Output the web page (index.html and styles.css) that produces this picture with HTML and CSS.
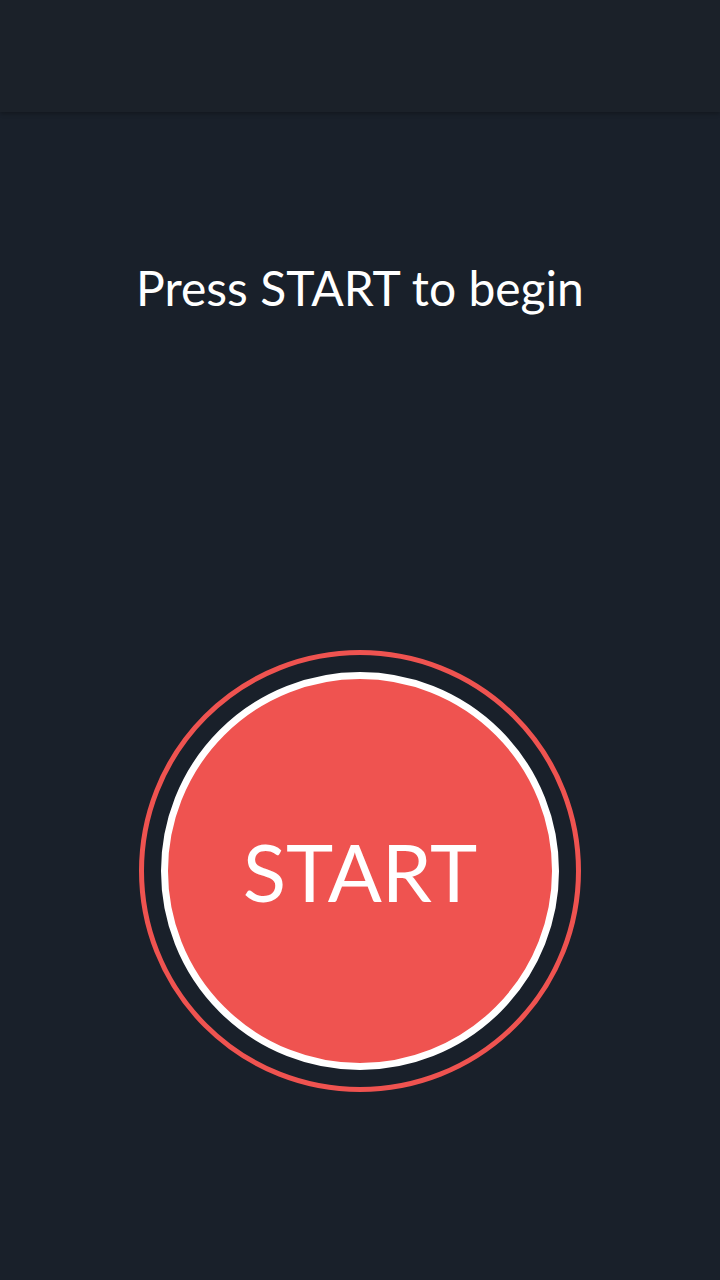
FILE: index.html
```html
<!DOCTYPE html>
<html>
<head>
<meta charset="utf-8">
<link rel="stylesheet" href="styles.css">
</head>
<body>
<div class="app">
  <header class="topbar"></header>
  <main class="main">
    <p class="prompt">Press START to begin</p>
    <div class="ring">
      <button class="start">START</button>
    </div>
  </main>
</div>
</body>
</html>
```
FILE: styles.css
```css
html, body {
  margin: 0;
  padding: 0;
  background: #19202a;
}
.app {
  width: 720px;
  height: 1280px;
  display: flex;
  flex-direction: column;
  font-family: Lato, "Open Sans", sans-serif;
  background: #19202a;
}
.topbar {
  height: 112px;
  background: #1b2129;
  box-shadow: 0 2px 4px rgba(0,0,0,0.25);
}
.main {
  display: flex;
  flex-direction: column;
  align-items: center;
}
.prompt {
  margin: 141px 0 0 0;
  color: #ffffff;
  font-size: 48px;
  line-height: 70px;
  font-weight: 400;
}
.ring {
  margin-top: 327px;
  width: 432px;
  height: 432px;
  border: 5px solid #ef5350;
  border-radius: 50%;
  display: flex;
  align-items: center;
  justify-content: center;
}
.start {
  width: 398px;
  height: 398px;
  border-radius: 50%;
  border: 7px solid #ffffff;
  background: #ef5350;
  color: #ffffff;
  font-family: Lato, "Open Sans", sans-serif;
  font-size: 80px;
  font-weight: 400;
  padding: 0;
  box-sizing: border-box;
}
```
